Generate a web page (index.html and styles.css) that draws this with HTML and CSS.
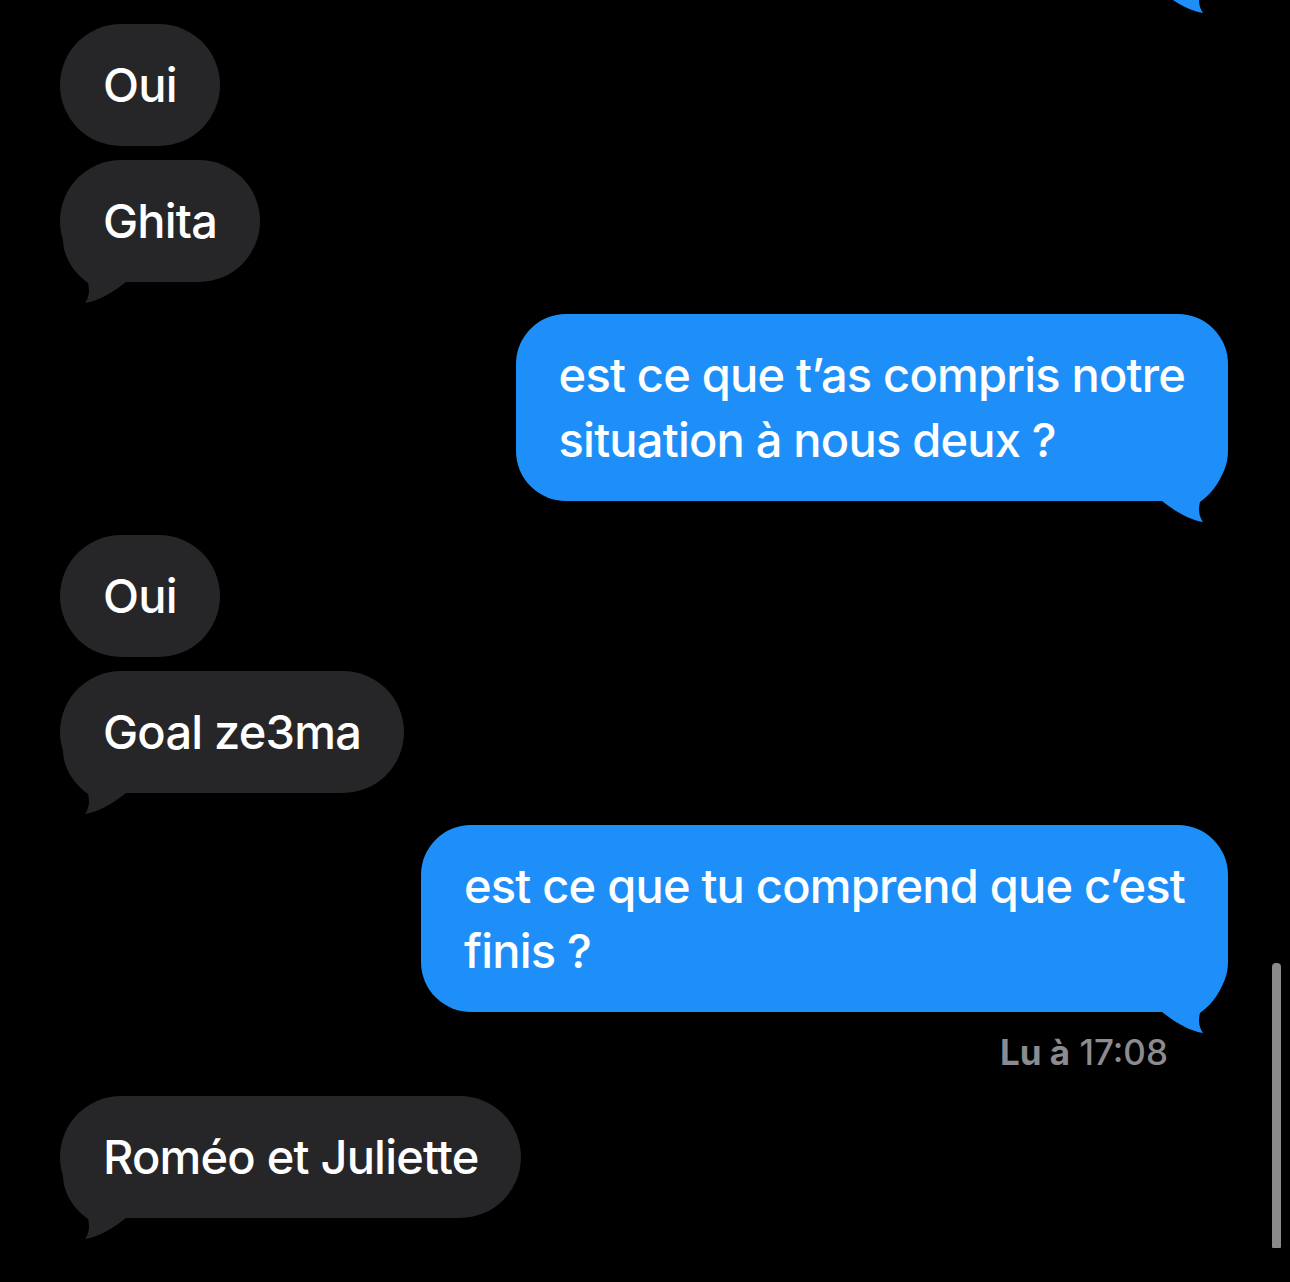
FILE: index.html
```html
<!DOCTYPE html>
<html lang="fr">
	<head>
		<meta charset="UTF-8" />
		<meta name="viewport" content="width=device-width, initial-scale=1.0" />
		<title>Messages</title>
		<link rel="stylesheet" href="styles.css">
	</head>

	<body>
		<main class="thread">
			<!--only the tail of the previous sent message is still on screen-->
			<div class="msg msg--out msg--offscreen">
				<div class="bubble bubble--out">
					<svg class="bubble__tail" viewBox="0 0 66 64" aria-hidden="true">
						<path d="M3,0 C3,18 14,34 28,44 C30,52 29,58 25,64 C38,62 52,54 66,43 L66,0 Z" />
					</svg>
				</div>
			</div>

			<div class="msg msg--in msg--first">
				<div class="bubble bubble--in">Oui</div>
			</div>
			<div class="msg msg--in msg--same">
				<div class="bubble bubble--in">
					Ghita
					<svg class="bubble__tail" viewBox="0 0 66 64" aria-hidden="true">
						<path d="M3,0 C3,18 14,34 28,44 C30,52 29,58 25,64 C38,62 52,54 66,43 L66,0 Z" />
					</svg>
				</div>
			</div>

			<div class="msg msg--out">
				<div class="bubble bubble--out">
					est ce que t’as compris notre<br />situation à nous deux ?
					<svg class="bubble__tail" viewBox="0 0 66 64" aria-hidden="true">
						<path d="M3,0 C3,18 14,34 28,44 C30,52 29,58 25,64 C38,62 52,54 66,43 L66,0 Z" />
					</svg>
				</div>
			</div>

			<div class="msg msg--in msg--after-out">
				<div class="bubble bubble--in">Oui</div>
			</div>
			<div class="msg msg--in msg--same">
				<div class="bubble bubble--in">
					Goal ze3ma
					<svg class="bubble__tail" viewBox="0 0 66 64" aria-hidden="true">
						<path d="M3,0 C3,18 14,34 28,44 C30,52 29,58 25,64 C38,62 52,54 66,43 L66,0 Z" />
					</svg>
				</div>
			</div>

			<div class="msg msg--out">
				<div class="bubble bubble--out">
					est ce que tu comprend que c’est<br />finis ?
					<svg class="bubble__tail" viewBox="0 0 66 64" aria-hidden="true">
						<path d="M3,0 C3,18 14,34 28,44 C30,52 29,58 25,64 C38,62 52,54 66,43 L66,0 Z" />
					</svg>
				</div>
			</div>
			<p class="receipt"><b>Lu à</b> 17:08</p>

			<div class="msg msg--in msg--after-receipt">
				<div class="bubble bubble--in">
					Roméo et Juliette
					<svg class="bubble__tail" viewBox="0 0 66 64" aria-hidden="true">
						<path d="M3,0 C3,18 14,34 28,44 C30,52 29,58 25,64 C38,62 52,54 66,43 L66,0 Z" />
					</svg>
				</div>
			</div>
		</main>

		<!--scroll indicator sits over the thread-->
		<div class="scrollbar"></div>
	</body>
</html>
```

FILE: styles.css
```css
:root {
	--bubble-in: #262629;
	--bubble-out: #1e8ff8;
	--receipt: #8b8b90;
}
html,
body {
	margin: 0;
	height: 100%;
	overflow: hidden;
}
body {
	background-color: #000;
	font-family: Inter, "Noto Sans", "Liberation Sans", sans-serif;
	position: relative;
}
.thread {
	display: flex;
	flex-direction: column;
	padding: 0 62px 0 60px;
}
.msg {
	display: flex;
	margin-top: 32px;
}
.msg--in {
	justify-content: flex-start;
}
.msg--out {
	justify-content: flex-end;
}
/*same sender, no tail on the one above*/
.msg--same {
	margin-top: 14px;
}
.msg--first {
	margin-top: 32px;
}
.msg--after-out {
	margin-top: 34px;
}
.msg--after-receipt {
	margin-top: 24px;
}
/*bubble body is above the window, only the tail peeks in*/
.msg--offscreen {
	margin-top: -68px;
}
.msg--offscreen .bubble {
	width: 300px;
	height: 60px;
	padding: 0;
}
.bubble {
	position: relative; /*the tail hangs off the bottom corner*/
	color: #fff;
	font-size: 47px;
	font-weight: 500;
	line-height: 65px;
	letter-spacing: -0.8px;
	padding: 28px 43px 29px;
	border-radius: 61px;
	white-space: nowrap;
}
.bubble--in {
	background: var(--bubble-in);
	fill: var(--bubble-in);
}
.bubble--out {
	background: var(--bubble-out);
	fill: var(--bubble-out);
	border-radius: 50px;
}
.bubble__tail {
	position: absolute;
	width: 66px;
	height: 64px;
	bottom: -21px;
	left: 0;
}
.bubble--out .bubble__tail {
	left: auto;
	right: 0;
	transform: scaleX(-1);
}
.receipt {
	margin: 20px 60px 0 0;
	align-self: flex-end;
	color: var(--receipt);
	font-size: 35px;
	font-weight: 500;
	line-height: 40px;
}
.receipt b {
	font-weight: 700;
}
.scrollbar {
	position: absolute;
	right: 9px;
	top: 963px;
	width: 9px;
	height: 285px;
	border-radius: 4px 4px 1px 1px;
	background: #8a8a8a;
}
```
